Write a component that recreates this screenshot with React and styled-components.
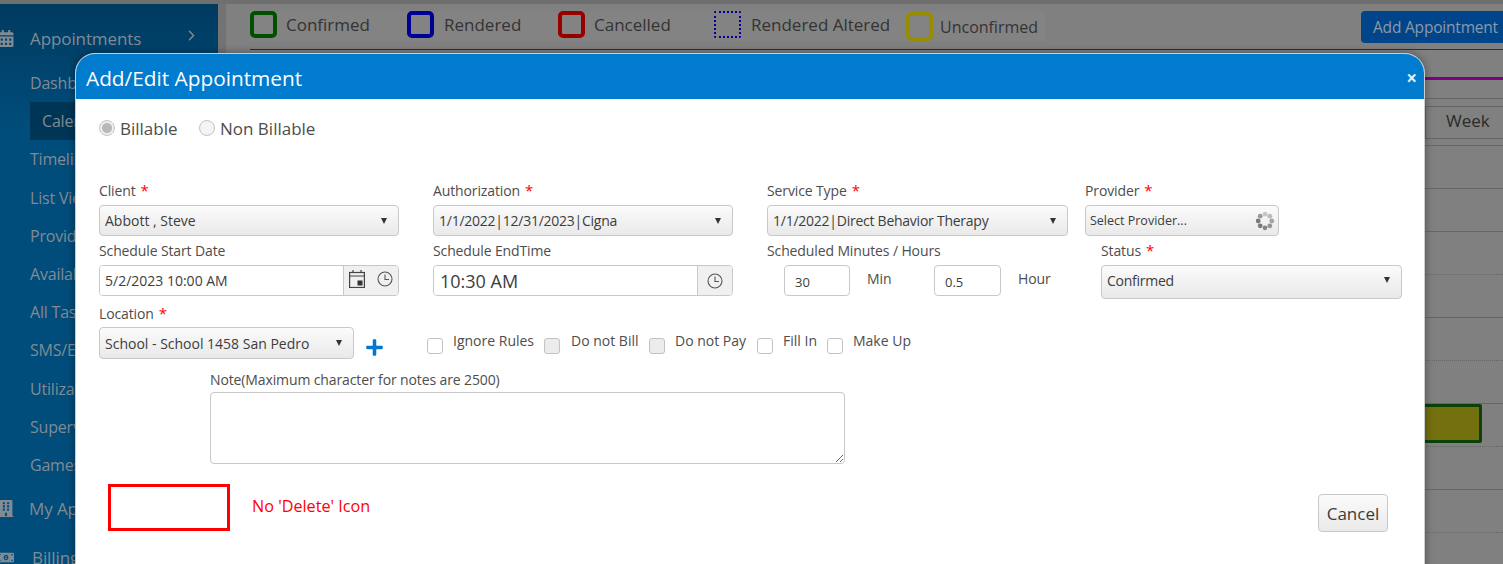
import React from "react"
import styled, { createGlobalStyle } from "styled-components"
import { FaCalendarAlt, FaBuilding, FaMoneyBillAlt, FaPlus } from "react-icons/fa"
import { ChevronRight } from "lucide-react"

const fontStack = `"Open Sans", "Noto Sans", "Liberation Sans", sans-serif`

const GlobalStyle = createGlobalStyle`
  * { box-sizing: border-box; }
  html, body { margin: 0; padding: 0; height: 100%; overflow: hidden; }
  body { font-family: ${fontStack}; background: #808080; }
`

const Page = styled.div`
  position: relative;
  width: 1503px;
  height: 564px;
  overflow: hidden;
  border-top: 4px solid #6f6f6f;
  display: flex;
  background: #808080;
`

const Sidebar = styled.nav`
  width: 218px;
  flex: none;
  padding-top: 14px;
  background: linear-gradient(#003b60, #004c7a 120px);
  color: #808b94;
  overflow: hidden;
`

const NavHead = styled.div`
  height: 40px;
  margin-top: ${(p) => p.$mt || 0}px;
  display: flex;
  align-items: center;
  padding-left: ${(p) => p.$pad || 30}px;
  font-size: 17px;
  letter-spacing: -0.1px;
  position: relative;
  white-space: nowrap;
  svg.lead {
    position: absolute;
    left: -2px;
    top: 12px;
    width: 16px;
    height: 17px;
  }
  svg.chev {
    position: absolute;
    left: 183px;
    top: 9px;
    width: 17px;
    height: 17px;
  }
`

const SubList = styled.div`
  padding: 6px 0 4px;
`

const SubItem = styled.div`
  height: 38.2px;
  display: flex;
  align-items: center;
  margin-left: 30px;
  padding-left: ${(p) => (p.$active ? 12 : 0)}px;
  font-size: 16px;
  letter-spacing: -0.2px;
  white-space: nowrap;
  background: ${(p) => (p.$active ? "#003556" : "transparent")};
`

const Gutter = styled.div`
  width: 8px;
  flex: none;
  background: #737373;
`

const Main = styled.main`
  flex: 1;
  min-width: 0;
  padding: 7px 0 0 24px;
  overflow: hidden;
`

const TopBar = styled.div`
  height: 38px;
  display: flex;
  align-items: flex-start;
`

const Legend = styled.div`
  width: 795px;
  height: 30px;
  display: flex;
  align-items: flex-start;
  background: #838383;
`

const LegendItem = styled.div`
  width: ${(p) => p.$w}px;
  flex: none;
  margin-top: ${(p) => p.$drop || 0}px;
  display: flex;
  gap: ${(p) => p.$gap || 9}px;
  align-items: center;
  height: 27px;
  font-size: ${(p) => p.$size || 17}px;
  color: #333;
  white-space: nowrap;
`

const Swatch = styled.span`
  width: 27px;
  height: ${(p) => p.$h || 27}px;
  flex: none;
  border: ${(p) => (p.$dotted ? "2px dotted" : "4px solid")} ${(p) => p.$color};
  border-radius: ${(p) => (p.$dotted ? 2 : 5)}px;
`

const AddButton = styled.button`
  margin-left: 316px;
  width: 170px;
  height: 32px;
  flex: none;
  border: 0;
  border-radius: 4px;
  padding: 0 0 0 12px;
  text-align: left;
  font: 15.5px ${fontStack};
  letter-spacing: -0.2px;
  color: #8b99a8;
  background: #00458a;
`

const Calendar = styled.section`
  border-top: 1px solid #0b4a0b;
`

const CalendarStripe = styled.div`
  margin-top: 27px;
  height: 3px;
  background: #800080;
`

const CalendarHead = styled.div`
  margin-top: 18px;
  height: 48px;
  padding: 7px 0 0 1175px;
  border-top: 1px solid #666;
  border-bottom: 1px solid #666;
`

const WeekButton = styled.div`
  width: 100px;
  height: 33px;
  padding-left: 20px;
  line-height: 28px;
  font-size: 17px;
  color: #2a2a2a;
  border: 1px solid #666;
`

const Slot = styled.div`
  position: relative;
  height: 43px;
  border-bottom: 1px ${(p) => (p.$dotted ? "dotted" : "solid")} #666;
`

const CalendarEvent = styled.div`
  position: absolute;
  top: 0;
  right: 21px;
  width: 200px;
  height: 39px;
  border: 3px solid #0a4207;
  border-radius: 2px;
  background: #75700f;
`

const Modal = styled.div`
  position: absolute;
  left: 75px;
  top: 49px;
  width: 1350px;
  height: 560px;
  background: #fff;
  border: 1px solid #c9ced3;
  border-top-left-radius: 20px;
  border-top-right-radius: 20px;
  box-shadow: 0 0 8px rgba(0, 0, 0, 0.4);
  overflow: hidden;
`

const ModalHeader = styled.header`
  height: 45px;
  display: flex;
  align-items: center;
  justify-content: space-between;
  padding: 2px 7px 0 10px;
  background: #007bce;
  color: #fff;
`

const ModalTitle = styled.h2`
  margin: 0;
  font-size: 20.8px;
  font-weight: 500;
`

const CloseMark = styled.span`
  font-size: 19px;
  font-weight: 700;
  color: #dceefa;
`

const ModalBody = styled.div`
  padding: 19px 0 0 23px;
  color: #4d4d4d;
`

const RadioRow = styled.div`
  height: 21px;
  margin-bottom: 41px;
  display: flex;
  align-items: center;
  font-size: 17px;
`

const RadioItem = styled.label`
  width: ${(p) => p.$w}px;
  display: flex;
  align-items: center;
  gap: 5px;
  white-space: nowrap;
`

const RadioDot = styled.span`
  width: 16px;
  height: 16px;
  margin-top: -1px;
  flex: none;
  border-radius: 50%;
  border: 1px solid #c4c4c4;
  background: ${(p) => (p.$on ? "radial-gradient(circle, #b9b9b9 0 4.5px, #efefef 5.5px)" : "#f4f4f4")};
`

const Row = styled.div`
  display: flex;
  align-items: flex-start;
  margin-bottom: 4px;
`

const Field = styled.div`
  width: ${(p) => p.$w}px;
  margin-left: ${(p) => p.$ml || 0}px;
  flex: none;
`

const Label = styled.div`
  height: ${(p) => p.$h || 25}px;
  padding-top: 1px;
  font-size: 14px;
  line-height: 19px;
  letter-spacing: -0.12px;
  white-space: nowrap;
`

const Star = styled.span`
  margin-left: 5px;
  color: #f00;
  font-size: 15px;
`

const SelectBox = styled.div`
  height: ${(p) => p.$h || 31}px;
  display: flex;
  align-items: center;
  justify-content: space-between;
  padding: 0 11px ${(p) => p.$pb || 0}px 5px;
  font-size: 14px;
  letter-spacing: ${(p) => (p.$ls === undefined ? -0.25 : p.$ls)}px;
  color: #3d3d3d;
  white-space: nowrap;
  border: 1px solid #c8c8c8;
  border-radius: 4px;
  background: linear-gradient(#fbfbfb, #e9e9e9);
`

const ProviderBox = styled(SelectBox)`
  padding: 0 3px 0 4px;
  font-size: 12.5px;
  letter-spacing: 0;
`

const Caret = styled.span`
  width: 0;
  height: 0;
  flex: none;
  border-left: 3.5px solid transparent;
  border-right: 3.5px solid transparent;
  border-top: 6px solid #333;
`

const TimeGroup = styled.div`
  height: 31px;
  display: flex;
  border: 1px solid #c8c8c8;
  border-radius: 4px;
  overflow: hidden;
`

const TimeInput = styled.input`
  flex: 1;
  min-width: 0;
  border: 0;
  outline: 0;
  padding: 0 0 0 ${(p) => p.$pad || 5}px;
  font: ${(p) => p.$size || 14}px ${fontStack};
  color: #3d3d3d;
  background: #fff;
`

const Addon = styled.div`
  width: ${(p) => p.$w}px;
  flex: none;
  display: flex;
  align-items: center;
  justify-content: ${(p) => (p.$single ? "center" : "flex-start")};
  gap: 12px;
  padding: 0 0 ${(p) => (p.$single ? 0 : 3)}px ${(p) => (p.$single ? 0 : 5)}px;
  border-left: 1px solid #c8c8c8;
  background: #f0f0f0;
  color: #444;
`

const DurationRow = styled.div`
  display: flex;
  padding-left: 17px;
`

const NumberBox = styled.input`
  width: ${(p) => p.$w}px;
  height: 31px;
  flex: none;
  padding: 3px 0 0 10px;
  border: 1px solid #c8c8c8;
  border-radius: 4px;
  outline: 0;
  font: 13px ${fontStack};
  color: #3d3d3d;
`

const Unit = styled.span`
  width: ${(p) => p.$w}px;
  flex: none;
  padding: 4px 0 0 17px;
  font-size: 14px;
  letter-spacing: -0.12px;
`

const AddLocation = styled.span`
  margin: 35px 0 0 11px;
  width: 19px;
  height: 19px;
  flex: none;
  color: #0078cf;
  svg {
    display: block;
    width: 19px;
    height: 19px;
  }
`

const CheckGroup = styled.div`
  margin-left: 43px;
  display: flex;
`

const CheckItem = styled.label`
  width: ${(p) => p.$w}px;
  flex: none;
  display: flex;
  align-items: flex-start;
  gap: ${(p) => p.$gap || 10}px;
  padding-top: 28px;
  font-size: 14px;
  line-height: 20px;
  white-space: nowrap;
`

const CheckBox = styled.span`
  width: 16px;
  height: 16px;
  margin-top: 7px;
  flex: none;
  border: 1px solid #c2c2c2;
  border-radius: 3px;
  background: ${(p) => (p.$off ? "#ececec" : "#fff")};
`

const NoteField = styled.div`
  margin: 10px 0 0 111px;
  width: 635px;
`

const NoteInput = styled.textarea`
  display: block;
  width: 635px;
  height: 72px;
  border: 1px solid #c8c8c8;
  border-radius: 4px;
  outline: 0;
`

const Footer = styled.footer`
  margin-top: 20px;
  padding: 0 36px 0 9px;
  display: flex;
  align-items: flex-start;
`

const DeleteCallout = styled.div`
  width: 122px;
  height: 47px;
  flex: none;
  border: 3px solid #f00;
`

const CalloutText = styled.span`
  margin: 11px 0 0 22px;
  font-size: 16.2px;
  color: #f00;
`

const CancelButton = styled.button`
  margin: 10px 0 0 auto;
  width: 70px;
  height: 38px;
  padding: 0;
  border: 1px solid #c8c8c8;
  border-radius: 4px;
  font: 17px ${fontStack};
  color: #3a3a3a;
  background: linear-gradient(#fbfbfb, #e9e9e9);
`

function CalendarIcon() {
  return (
    <svg width="16" height="18" viewBox="0 0 16 18" fill="none" stroke="#444" strokeWidth="1.2">
      <rect x="0.6" y="2.5" width="14.8" height="15" />
      <path d="M0.6 6h14.8M4 0v2.5M12 0v2.5" />
      <rect x="8.5" y="10.5" width="5" height="5" fill="#333" stroke="none" />
    </svg>
  )
}

function ClockIcon() {
  return (
    <svg width="16" height="16" viewBox="0 0 16 16" fill="none" stroke="#555" strokeWidth="1.1">
      <circle cx="8" cy="8" r="7" />
      <path d="M8 3.5V8.5H12" />
    </svg>
  )
}

const spinnerDots = [0, 45, 90, 135, 180, 225, 270, 315]
const spinnerShades = ["#a8a4a2", "#96928f", "#888482", "#7d7977", "#7d7977", "#9c9896", "#c8c6c4", "#bcbab8"]

function Spinner() {
  return (
    <svg width="20" height="20" viewBox="0 0 20 20">
      {spinnerDots.map((deg, i) => {
        const rad = (deg * Math.PI) / 180
        return (
          <circle
            key={deg}
            cx={10 + 6.8 * Math.cos(rad)}
            cy={10 + 6.8 * Math.sin(rad)}
            r="2.4"
            fill={spinnerShades[i]}
          />
        )
      })}
    </svg>
  )
}

const subItems = [
  "Dashboard",
  "Calendar",
  "Timeline",
  "List View",
  "Providers",
  "Availability",
  "All Tasks",
  "SMS/Email",
  "Utilization",
  "Supervision",
  "Games",
]

const legend = [
  { label: "Confirmed", color: "#005000", w: 157 },
  { label: "Rendered", color: "#000094", w: 151, gap: 10 },
  { label: "Cancelled", color: "#980000", w: 156 },
  { label: "Rendered Altered", color: "#000094", w: 192, gap: 10, dotted: true },
  { label: "Unconfirmed", color: "#988c00", w: 139, gap: 7, h: 29, size: 16, drop: 2 },
]

const slots = [false, false, true, false, true, false, true, false, true, false]

export default function App() {
  return (
    <>
      <GlobalStyle />
      <Page>
        <Sidebar>
          <NavHead>
            <FaCalendarAlt className="lead" />
            Appointments
            <ChevronRight className="chev" />
          </NavHead>
          <SubList>
            {subItems.map((item) => (
              <SubItem key={item} $active={item === "Calendar"}>
                {item}
              </SubItem>
            ))}
          </SubList>
          <NavHead $pad={29}>
            <FaBuilding className="lead" />
            My Appointments
          </NavHead>
          <NavHead $pad={32} $mt={9}>
            <FaMoneyBillAlt className="lead" />
            Billing
          </NavHead>
        </Sidebar>
        <Gutter />
        <Main>
          <TopBar>
            <Legend>
              {legend.map((l) => (
                <LegendItem key={l.label} $w={l.w} $gap={l.gap} $size={l.size} $drop={l.drop}>
                  <Swatch $color={l.color} $dotted={l.dotted} $h={l.h} />
                  {l.label}
                </LegendItem>
              ))}
            </Legend>
            <AddButton>Add Appointment</AddButton>
          </TopBar>
          <Calendar>
            <CalendarStripe />
            <CalendarHead>
              <WeekButton>Week</WeekButton>
            </CalendarHead>
            {slots.map((dotted, i) => (
              <Slot key={i} $dotted={dotted}>
                {i === 6 && <CalendarEvent />}
              </Slot>
            ))}
          </Calendar>
        </Main>

        <Modal>
          <ModalHeader>
            <ModalTitle>Add/Edit Appointment</ModalTitle>
            <CloseMark>×</CloseMark>
          </ModalHeader>
          <ModalBody>
            <RadioRow>
              <RadioItem $w={100}>
                <RadioDot $on />
                Billable
              </RadioItem>
              <RadioItem $w={130}>
                <RadioDot />
                Non Billable
              </RadioItem>
            </RadioRow>

            <Row>
              <Field $w={300}>
                <Label>
                  Client<Star>*</Star>
                </Label>
                <SelectBox $ls={0}>
                  Abbott , Steve
                  <Caret />
                </SelectBox>
              </Field>
              <Field $w={300} $ml={34}>
                <Label>
                  Authorization<Star>*</Star>
                </Label>
                <SelectBox>
                  1/1/2022|12/31/2023|Cigna
                  <Caret />
                </SelectBox>
              </Field>
              <Field $w={301} $ml={34}>
                <Label>
                  Service Type<Star>*</Star>
                </Label>
                <SelectBox>
                  1/1/2022|Direct Behavior Therapy
                  <Caret />
                </SelectBox>
              </Field>
              <Field $w={194} $ml={17}>
                <Label>
                  Provider<Star>*</Star>
                </Label>
                <ProviderBox>
                  Select Provider...
                  <Spinner />
                </ProviderBox>
              </Field>
            </Row>

            <Row>
              <Field $w={300}>
                <Label>Schedule Start Date</Label>
                <TimeGroup>
                  <TimeInput readOnly value="5/2/2023 10:00 AM" />
                  <Addon $w={55}>
                    <CalendarIcon />
                    <ClockIcon />
                  </Addon>
                </TimeGroup>
              </Field>
              <Field $w={300} $ml={34}>
                <Label>Schedule EndTime</Label>
                <TimeGroup>
                  <TimeInput readOnly value="10:30 AM" $size={18} $pad={6} />
                  <Addon $w={35} $single>
                    <ClockIcon />
                  </Addon>
                </TimeGroup>
              </Field>
              <Field $w={301} $ml={34}>
                <Label>Scheduled Minutes / Hours</Label>
                <DurationRow>
                  <NumberBox $w={66} readOnly value="30" />
                  <Unit $w={84}>Min</Unit>
                  <NumberBox $w={67} readOnly value="0.5" />
                  <Unit $w={60}>Hour</Unit>
                </DurationRow>
              </Field>
              <Field $w={301} $ml={33}>
                <Label>
                  Status<Star>*</Star>
                </Label>
                <SelectBox $h={34} $pb={4}>
                  Confirmed
                  <Caret />
                </SelectBox>
              </Field>
            </Row>

            <Row>
              <Field $w={255}>
                <Label $h={24}>
                  Location<Star>*</Star>
                </Label>
                <SelectBox $h={32} $ls={0}>
                  School - School 1458 San Pedro
                  <Caret />
                </SelectBox>
              </Field>
              <AddLocation>
                <FaPlus />
              </AddLocation>
              <CheckGroup>
                <CheckItem $w={117}>
                  <CheckBox />
                  Ignore Rules
                </CheckItem>
                <CheckItem $w={105} $gap={11}>
                  <CheckBox $off />
                  Do not Bill
                </CheckItem>
                <CheckItem $w={108}>
                  <CheckBox $off />
                  Do not Pay
                </CheckItem>
                <CheckItem $w={70}>
                  <CheckBox />
                  Fill In
                </CheckItem>
                <CheckItem $w={100}>
                  <CheckBox />
                  Make Up
                </CheckItem>
              </CheckGroup>
            </Row>

            <NoteField>
              <Label $h={23}>Note(Maximum character for notes are 2500)</Label>
              <NoteInput />
            </NoteField>

            <Footer>
              <DeleteCallout />
              <CalloutText>No 'Delete' Icon</CalloutText>
              <CancelButton>Cancel</CancelButton>
            </Footer>
          </ModalBody>
        </Modal>
      </Page>
    </>
  )
}
